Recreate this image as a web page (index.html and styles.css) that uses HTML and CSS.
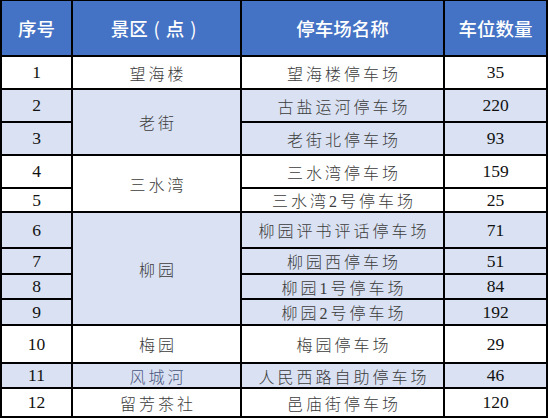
FILE: index.html
```html
<!DOCTYPE html>
<html lang="zh-CN">
<head>
<meta charset="utf-8">
<title>停车场</title>
<link rel="stylesheet" href="styles.css">
</head>
<body>
<div class="table">
  <div class="th">序号</div>
  <div class="th">景区<span class="paren">(</span>点<span class="paren">)</span></div>
  <div class="th">停车场名称</div>
  <div class="th">车位数量</div>

  <div class="td num">1</div>
  <div class="td zh">望海楼</div>
  <div class="td zh">望海楼停车场</div>
  <div class="td num">35</div>

  <div class="td num band">2</div>
  <div class="td zh band span2">老街</div>
  <div class="td zh band">古盐运河停车场</div>
  <div class="td num band">220</div>
  <div class="td num band">3</div>
  <div class="td zh band">老街北停车场</div>
  <div class="td num band">93</div>

  <div class="td num">4</div>
  <div class="td zh span2">三水湾</div>
  <div class="td zh">三水湾停车场</div>
  <div class="td num">159</div>
  <div class="td num">5</div>
  <div class="td zh">三水湾2号停车场</div>
  <div class="td num">25</div>

  <div class="td num band">6</div>
  <div class="td zh band span4">柳园</div>
  <div class="td zh band">柳园评书评话停车场</div>
  <div class="td num band">71</div>
  <div class="td num band">7</div>
  <div class="td zh band">柳园西停车场</div>
  <div class="td num band">51</div>
  <div class="td num band">8</div>
  <div class="td zh band">柳园1号停车场</div>
  <div class="td num band">84</div>
  <div class="td num band">9</div>
  <div class="td zh band">柳园2号停车场</div>
  <div class="td num band">192</div>

  <div class="td num">10</div>
  <div class="td zh">梅园</div>
  <div class="td zh">梅园停车场</div>
  <div class="td num">29</div>

  <div class="td num band">11</div>
  <div class="td zh band blue">风城河</div>
  <div class="td zh band">人民西路自助停车场</div>
  <div class="td num band">46</div>

  <div class="td num">12</div>
  <div class="td zh">留芳茶社</div>
  <div class="td zh">邑庙街停车场</div>
  <div class="td num">120</div>
</div>
</body>
</html>
```

FILE: styles.css
```css
html, body {
  margin: 0;
  padding: 0;
  background: #ffffff;
}

.table {
  width: 548px;
  height: 418px;
  box-sizing: border-box;
  display: grid;
  grid-template-columns: 69px 167px 201px 101px;
  grid-template-rows: 54px 31px 31px 31px 31px 22px 34px 24px 23px 24px 36px 23px 27px;
  gap: 2px;
  padding: 1px 2px 2px 2px;
  background: #000000;
}

.th,
.td {
  display: flex;
  align-items: center;
  justify-content: center;
  background: #ffffff;
  white-space: nowrap;
  overflow: hidden;
}

.th {
  background: #4472c4;
  color: #ffffff;
  font-family: "Noto Sans CJK SC", "Noto Sans", sans-serif;
  font-size: 18.5px;
  font-weight: 500;
}

.paren {
  display: inline-block;
  width: 18px;
  text-align: center;
  font-weight: 400;
}

.td.band {
  background: #d9e1f2;
}

.num {
  font-family: "Liberation Serif", "Noto Sans CJK SC", serif;
  font-size: 17.5px;
  color: #111111;
}

.zh {
  font-family: "Liberation Serif", "Noto Sans CJK SC", sans-serif;
  font-size: 16px;
  font-weight: 300;
  letter-spacing: 3px;
  padding-left: 3px;
  color: #3c3c3c;
}

.zh.blue {
  color: #4a5680;
}

.span2 {
  grid-row: span 2;
}

.span4 {
  grid-row: span 4;
}
```
